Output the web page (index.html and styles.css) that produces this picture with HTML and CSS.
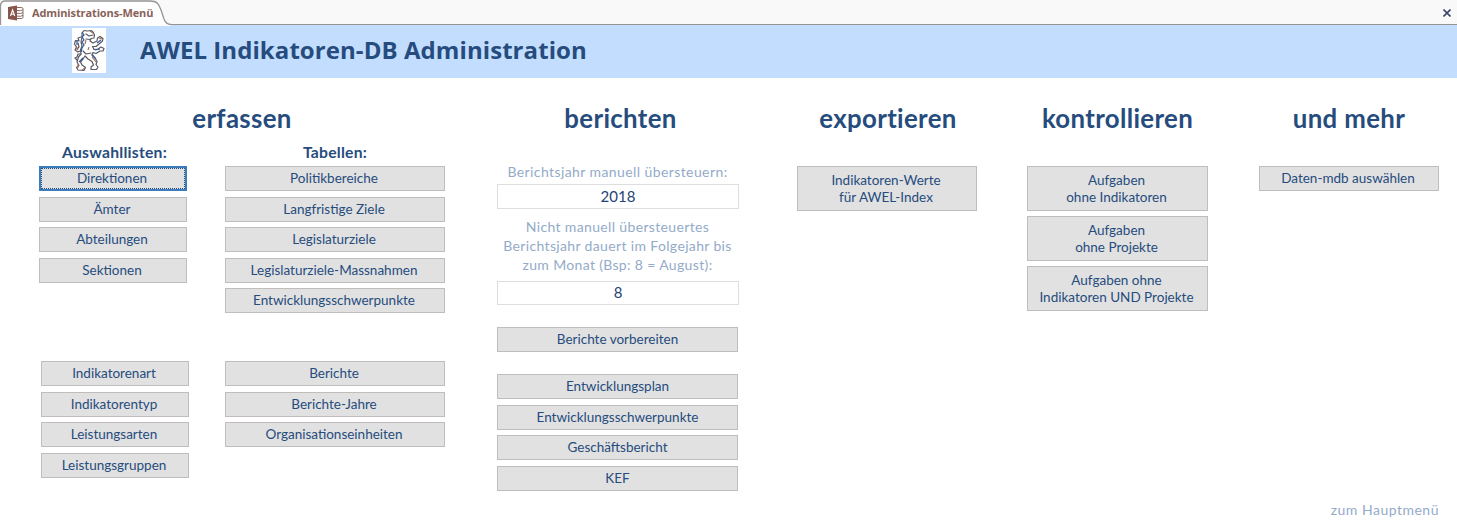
FILE: index.html
```
<!DOCTYPE html>
<html lang="de">
<head>
<meta charset="utf-8">
<title>Administrations-Menü</title>
<link rel="stylesheet" href="styles.css">
</head>
<body>
<nav class="tabs">
  <svg class="tab-shape" width="172" height="26" viewBox="0 0 172 26">
    <path d="M0 26V6Q0 1 5 1H150C157 1 159 4 161 10L164 19Q166 24.500 171 24.500V26H0Z" fill="#fff"/>
    <path d="M.5 25V6Q.5 1 5.500 1H150C157 1 159 4 161 10L164 19Q166 24.500 171 24.500" fill="none" stroke="#979393" stroke-width="1.300"/>
  </svg>
  <div class="tab">
    <svg class="tab-icon" width="16" height="16" viewBox="0 0 16 16">
      <path d="M9 2.500h4.500q1.500 0 1.500 1.300v8.400q0 1.300-1.500 1.300H9M9 5.500q4 .8 6-.8M9 8.300q4 .8 6-.8M9 11.100q4 .8 6-.8" fill="none" stroke="#8c6a61" stroke-width="1"/>
      <path d="M0 2L9 .5v15L0 14Z" fill="#87554a"/>
      <path d="M2.500 11L4.600 5L6.700 11M3.300 9.200H6" fill="none" stroke="#fff" stroke-width="1.100"/>
    </svg>
    <span class="tab-title">Administrations-Menü</span>
  </div>
  <svg class="close" width="8" height="8" viewBox="0 0 8 8"><path d="M.5 .5L7.500 7.500M7.500 .5L.5 7.500" stroke="#3c4668" stroke-width="1.600"/></svg>
</nav>
<header class="banner">
  <svg class="crest" width="34" height="45" viewBox="0 0 34 45">
    <path fill="#fff" d="M0 0h34v45H0z"/>
    <g fill="none" stroke="#5c5865" stroke-width="1.200" stroke-linejoin="round" stroke-linecap="round">
      <path d="M10 5L12 2.500L15 3L19 2.500L21 4L22.500 7L22 10L19 10.500L18 13L21 15L25 13L25.500 10L28 8.500L31 10.500L30.500 13L27 16L24 18.500L20.500 18.500L22 21.500L26 21L29 19L32 20.500L31 23L28 23L24 25.500L21 24.500L20 27.500L23 30L25 33.500L24 36.500L26 39L24.500 41.500L19 41.500L19 39L21.500 37L20 33.500L16 31L13 28L11 31L8.500 34L10 37L13.500 39.500L12 42.500L6 42L4.500 39.500L7 37.500L5 34L6.500 29L9 26L8.500 22L10 18L9 14L10 9Z"/>
      <path d="M14 6L17 8L21 7M14 11L18 11.500M11 23L14 26L19 25M9 9L6 10L7 13L3.500 12.500L2.500 16L4.500 19L3 22L6 24L8 23M9 26L6 26L5 29L3 30L5 32M6 15L7 19L5 21"/>
    </g>
    <path d="M10 4L12 7L10 9L12 12L10 14L12 17L10 20L9 24M20 26L24 31M11 30L7 34M25 15L29 12M23 22L28 21M5 12L5 17" fill="none" stroke="#315b98" stroke-width="1.200"/>
    <path d="M18 3L21 5M14 12L13 16M20 29L24 34M6 36L6 40M27 10L30 11M4 18L6 22M13 40L10 42M17 19L16 22" fill="none" stroke="#a66b58" stroke-width="1.100"/>
  </svg>
  <h1 class="title">AWEL Indikatoren-DB Administration</h1>
</header>
<main class="menu">
  <section class="section enter">
    <h2 class="heading">erfassen</h2>
    <div class="groups">
      <div class="lists">
        <h3 class="subheading">Auswahllisten:</h3>
        <div class="stack first">
          <button class="btn focused">Direktionen</button>
          <button class="btn">Ämter</button>
          <button class="btn">Abteilungen</button>
          <button class="btn">Sektionen</button>
        </div>
        <div class="stack second shifted">
          <button class="btn">Indikatorenart</button>
          <button class="btn">Indikatorentyp</button>
          <button class="btn">Leistungsarten</button>
          <button class="btn">Leistungsgruppen</button>
        </div>
      </div>
      <div class="tables">
        <h3 class="subheading">Tabellen:</h3>
        <div class="stack first">
          <button class="btn">Politikbereiche</button>
          <button class="btn">Langfristige Ziele</button>
          <button class="btn">Legislaturziele</button>
          <button class="btn">Legislaturziele-Massnahmen</button>
          <button class="btn">Entwicklungsschwerpunkte</button>
        </div>
        <div class="stack second">
          <button class="btn">Berichte</button>
          <button class="btn">Berichte-Jahre</button>
          <button class="btn">Organisationseinheiten</button>
        </div>
      </div>
    </div>
  </section>
  <section class="section report">
    <h2 class="heading">berichten</h2>
    <label class="label" for="year">Berichtsjahr manuell übersteuern:</label>
    <input class="field" id="year" value="2018">
    <label class="label note" for="month">Nicht manuell übersteuertes<br>Berichtsjahr dauert im Folgejahr bis<br>zum Monat (Bsp: 8 = August):</label>
    <input class="field" id="month" value="8">
    <button class="btn prepare">Berichte vorbereiten</button>
    <div class="stack">
      <button class="btn">Entwicklungsplan</button>
      <button class="btn">Entwicklungsschwerpunkte</button>
      <button class="btn">Geschäftsbericht</button>
      <button class="btn">KEF</button>
    </div>
  </section>
  <section class="section export">
    <h2 class="heading">exportieren</h2>
    <div class="stack actions">
      <button class="btn tall">Indikatoren-Werte<br>für AWEL-Index</button>
    </div>
  </section>
  <section class="section control">
    <h2 class="heading">kontrollieren</h2>
    <div class="stack actions">
      <button class="btn tall">Aufgaben<br>ohne Indikatoren</button>
      <button class="btn tall">Aufgaben<br>ohne Projekte</button>
      <button class="btn tall">Aufgaben ohne<br>Indikatoren UND Projekte</button>
    </div>
  </section>
  <section class="section more">
    <h2 class="heading">und mehr</h2>
    <div class="stack actions">
      <button class="btn">Daten-mdb auswählen</button>
    </div>
    <a class="home">zum Hauptmenü</a>
  </section>
</main>
</body>
</html>
```
FILE: styles.css
```
* { box-sizing: border-box; }
body { margin: 0; height: 530px; overflow: hidden; background: #fff; color: #264c7d; font-family: Lato, Carlito, sans-serif; }
h1, h2, h3 { margin: 0; white-space: nowrap; }

.tabs { position: relative; height: 25px; display: flex; align-items: center; background: #f9f9f9; border-bottom: 1px solid #979393; }
.tab-shape { position: absolute; left: 0; top: 0; }
.tab { position: relative; display: flex; align-items: center; padding: 2px 0 0 8px; gap: 8px; flex: 1; }
.tab-title { font: bold 11px/16px "Open Sans", sans-serif; letter-spacing: -.12px; color: #87625a; white-space: nowrap; }
.close { margin: 2px 6px 0 0; }

.banner { height: 53px; display: flex; align-items: flex-start; background: #c3ddff; padding: 3px 0 0 72px; }
.title { margin-left: 34px; font: bold 24px/43px "Open Sans", sans-serif; letter-spacing: .07px; }

.menu { display: flex; align-items: flex-start; padding: 21px 18px 0 39px; height: 452px; }
.section { flex: none; display: flex; flex-direction: column; }
.enter { width: 406px; }
.report { width: 241px; margin-left: 52px; }
.export { width: 180px; margin-left: 59px; }
.control { width: 181px; margin-left: 50px; }
.more { width: 180px; margin-left: 51px; }

.heading { font-size: 25.8px; line-height: 38px; letter-spacing: .35px; text-align: center; }
.report .heading { padding-left: 6px; }
.export .heading { padding-left: 2px; }
.groups { display: flex; gap: 38px; margin-top: 2px; }
.lists { width: 148px; }
.tables { width: 220px; }
.subheading { margin-bottom: 1px; font-size: 15.7px; line-height: 26px; letter-spacing: .25px; text-align: center; }
.lists .subheading { padding-left: 3px; }

.stack { display: flex; flex-direction: column; gap: 5.5px; }
.first { height: 195px; }
.shifted { margin: 0 -2px 0 2px; }
.actions { margin-top: 29px; }

.btn { height: 25px; flex: none; padding: 0 2px 0 0; border: 1px solid #c1bdbd; border-radius: 0; background: #e1e1e1; color: #264c7d; font: 13.5px/17px Lato, Carlito, sans-serif; letter-spacing: 0; white-space: nowrap; }
.report .btn { padding-right: 0; }
.tall { height: 45px; }
.control .stack { gap: 5.2px; }
.focused { border: 2px solid #3d7cba; outline: 1px dotted #264c7d; outline-offset: -3px; }

.label { margin-top: 25px; font-size: 14px; line-height: 19px; letter-spacing: .41px; text-align: center; white-space: nowrap; color: #93abc9; }
.note { margin-top: 8px; letter-spacing: .35px; }
.field { width: 242px; height: 25px; margin-top: 3px; padding: 0 0 2px; border: 1px solid #dedede; border-radius: 0; background: #fff; color: #1f4376; font: 15px Lato, Carlito, sans-serif; text-align: center; }
.note + .field { margin-top: 7px; height: 24px; }
.prepare { margin: 22px 0; }
.home { margin-top: 309px; font-size: 14px; line-height: 20px; letter-spacing: .5px; text-align: right; color: #93abc9; }
```
